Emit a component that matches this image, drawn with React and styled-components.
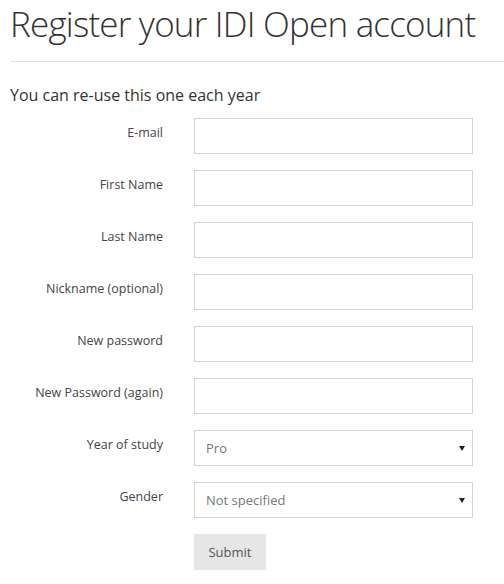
import React from 'react'
import styled, { createGlobalStyle } from 'styled-components'

const GlobalStyle = createGlobalStyle`
  html, body {
    margin: 0;
    padding: 0;
    background: #fff;
    font-family: "Open Sans", "Liberation Sans", sans-serif;
    color: #333;
  }
`

const Page = styled.div`
  padding: 0 0 0 10px;
`

// no light weight installed: regular, tightened to the reference width
const Title = styled.h1`
  margin: 0;
  padding-top: 2px;
  font-family: "Open Sans", sans-serif;
  font-size: 35px;
  font-weight: 300;
  letter-spacing: -0.8px;
  line-height: 44px;
  white-space: nowrap;
  color: #333;
`

const Rule = styled.hr`
  border: 0;
  border-top: 1px solid #e3e3e3;
  margin: 15px 0 0 0;
`

const Lead = styled.p`
  margin: 22px 0 0 0;
  font-size: 16px;
  line-height: 22px;
  color: #333;
`

const Form = styled.form`
  display: grid;
  grid-template-columns: 153px 279px;
  column-gap: 31px;
  row-gap: 16px;
  margin-top: 12px;
`

const Label = styled.label`
  text-align: right;
  font-size: 12.5px;
  line-height: 18px;
  padding-top: 6px;
  color: #444;
`

const Input = styled.input`
  box-sizing: border-box;
  height: 36px;
  width: 279px;
  border: 1px solid #d4d4d4;
  background: #fff;
  margin: 0;
  padding: 0 11px;
  font-family: inherit;
  font-size: 13px;
  outline: none;
`

const SelectBox = styled.div`
  position: relative;
  box-sizing: border-box;
  height: 36px;
  width: 279px;
  border: 1px solid #d4d4d4;
  background: #fff;
  display: flex;
  align-items: center;
  padding: 0 11px;
  font-size: 13px;
  color: #777;
`

const Arrow = styled.span`
  position: absolute;
  right: 7px;
  top: 15px;
  width: 0;
  height: 0;
  border-left: 3px solid transparent;
  border-right: 3px solid transparent;
  border-top: 5px solid #222;
`

const Submit = styled.button`
  grid-column: 2;
  justify-self: start;
  box-sizing: border-box;
  width: 72px;
  height: 36px;
  border: 0;
  background: #e6e6e6;
  color: #555;
  font-family: inherit;
  font-size: 13px;
  padding: 0;
`

const fields = [
  'E-mail',
  'First Name',
  'Last Name',
  'Nickname (optional)',
  'New password',
  'New Password (again)',
]

const selects = [
  { label: 'Year of study', value: 'Pro' },
  { label: 'Gender', value: 'Not specified' },
]

export default function App() {
  return (
    <Page>
      <GlobalStyle />
      <Title>Register your IDI Open account</Title>
      <Rule />
      <Lead>You can re-use this one each year</Lead>
      <Form onSubmit={(e) => e.preventDefault()}>
        {fields.map((f) => (
          <React.Fragment key={f}>
            <Label>{f}</Label>
            <Input type={f.toLowerCase().includes('password') ? 'password' : 'text'} />
          </React.Fragment>
        ))}
        {selects.map((s) => (
          <React.Fragment key={s.label}>
            <Label>{s.label}</Label>
            <SelectBox>
              {s.value}
              <Arrow />
            </SelectBox>
          </React.Fragment>
        ))}
        <Submit type="submit">Submit</Submit>
      </Form>
    </Page>
  )
}
